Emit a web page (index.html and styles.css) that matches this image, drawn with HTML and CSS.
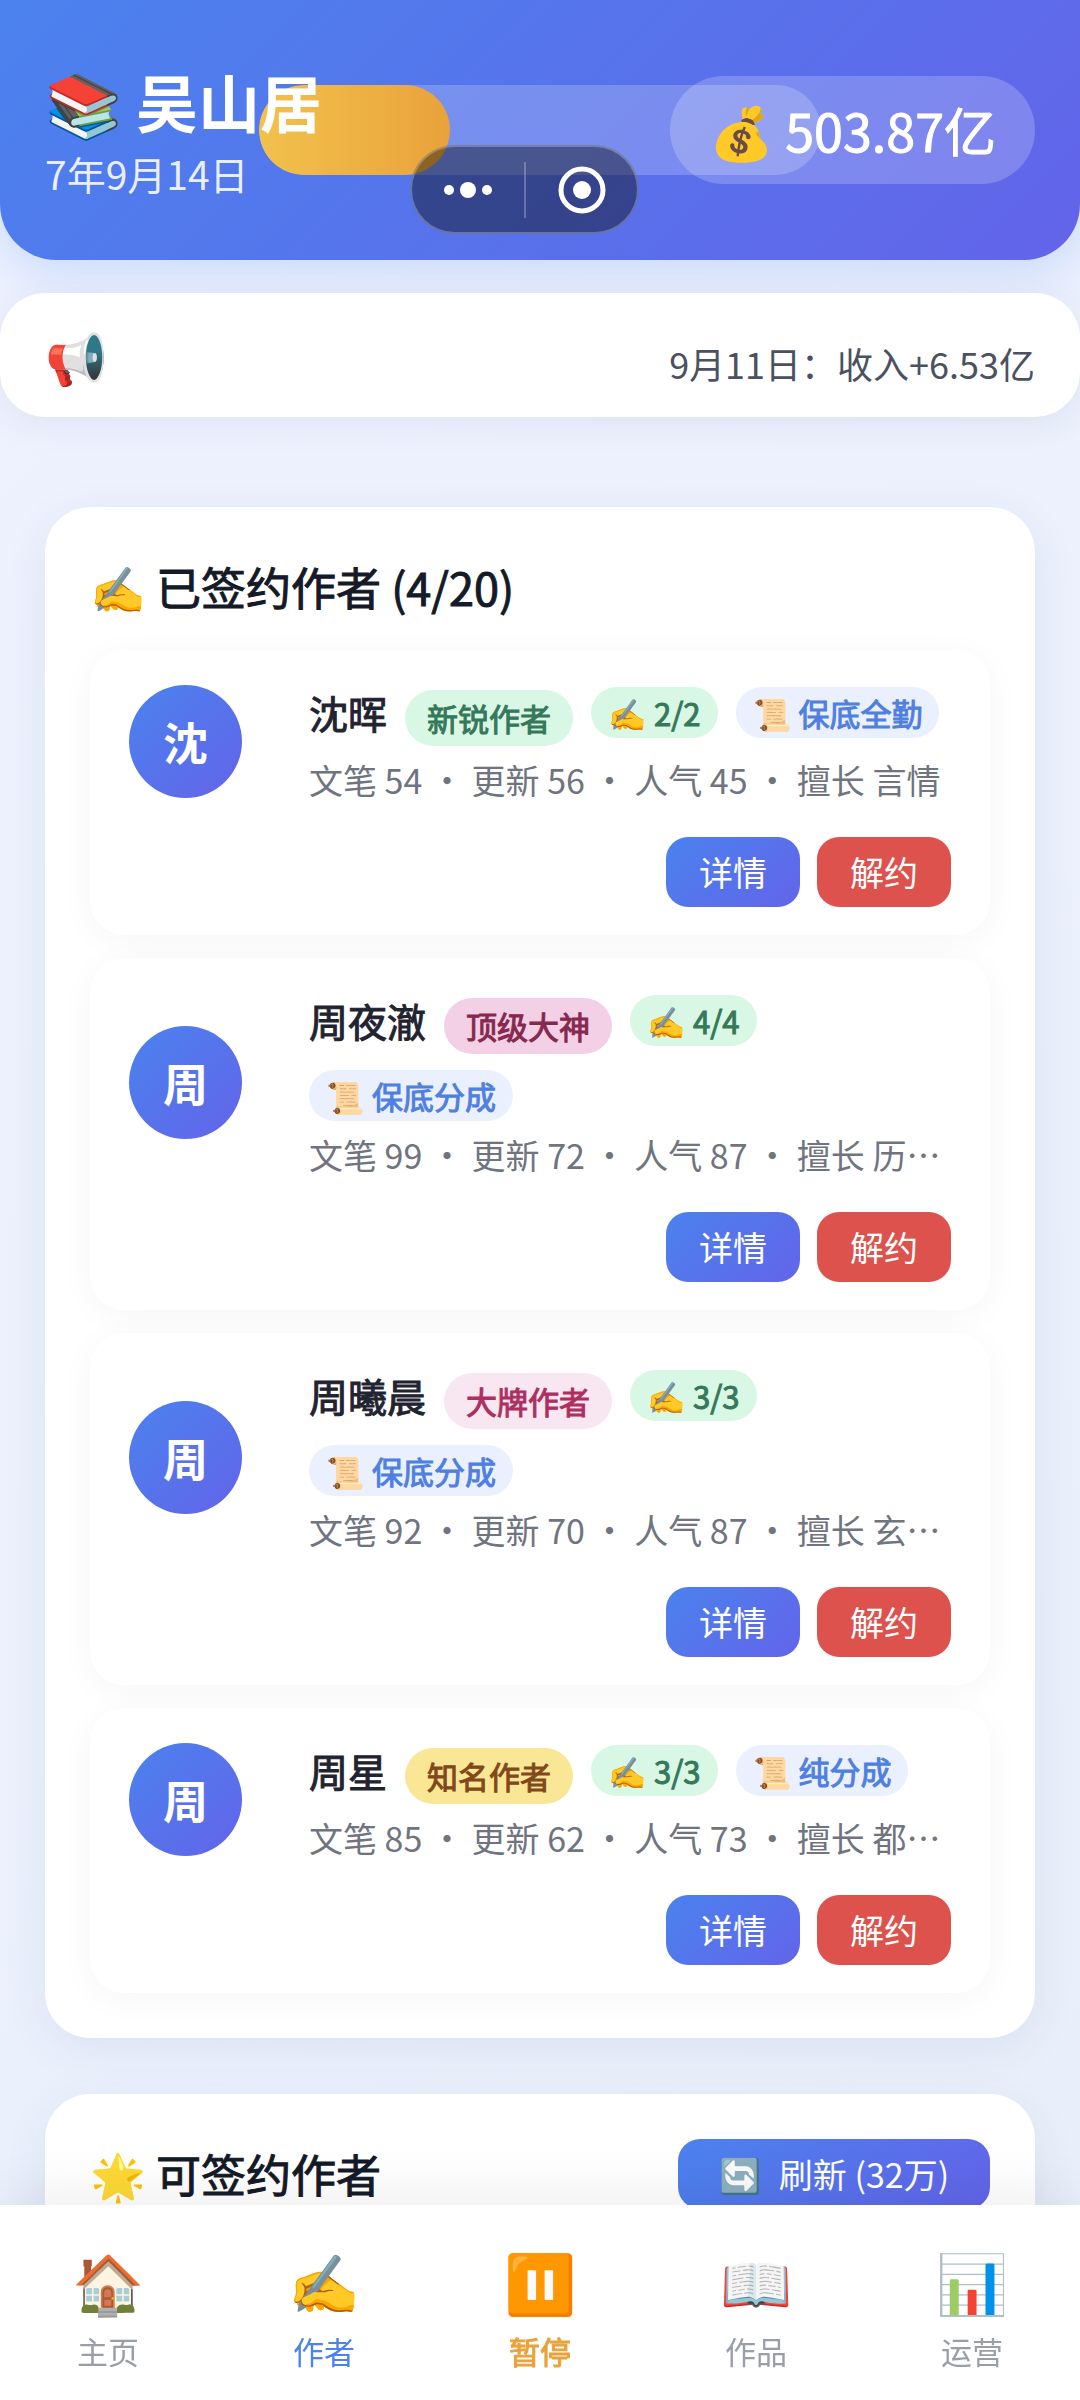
FILE: index.html
```html
<!DOCTYPE html>
<html lang="zh-CN">
<head>
<meta charset="utf-8">
<meta name="viewport" content="width=device-width, initial-scale=1">
<title>吴山居</title>
<link rel="stylesheet" href="styles.css">
</head>
<body>
<header class="topbar">
  <div class="progress"><div class="progress-fill" style="width:34%"></div></div>
  <div class="studio">
    <h1 class="studio-name"><span class="emoji">📚</span> 吴山居</h1>
    <p class="studio-date">7年9月14日</p>
  </div>
  <div class="money medium"><span class="emoji">💰</span> 503.87亿</div>
  <div class="capsule">
    <button type="button" class="capsule-btn" aria-label="更多"><svg width="48" height="48" viewBox="0 0 48 48"><g fill="#fff"><circle cx="5" cy="24" r="5"/><circle cx="24" cy="24" r="8"/><circle cx="43" cy="24" r="5"/></g></svg></button>
    <span class="capsule-line"></span>
    <button type="button" class="capsule-btn" aria-label="关闭"><svg width="48" height="48" viewBox="0 0 48 48"><circle cx="24" cy="24" r="21" fill="none" stroke="#fff" stroke-width="5"/><circle cx="24" cy="24" r="9" fill="#fff"/></svg></button>
  </div>
</header>

<section class="notice">
  <span class="emoji notice-icon">📢</span>
  <p class="notice-text">9月11日：收入+6.53亿</p>
</section>

<main class="content">
  <section class="panel">
    <div class="panel-head">
      <h2 class="panel-title medium"><span class="emoji">✍️</span> 已签约作者 (4/20)</h2>
    </div>
    <div class="author-list">
      <article class="author">
        <div class="author-main">
          <div class="avatar">沈</div>
          <div class="info">
            <div class="tags">
              <h3 class="name medium">沈晖</h3>
              <span class="level level-new medium">新锐作者</span>
              <span class="tag tag-count medium"><span class="emoji">✍️</span> 2/2</span>
              <span class="tag tag-deal medium"><span class="emoji">📜</span> 保底全勤</span>
            </div>
            <p class="stats">文笔 54 • 更新 56 • 人气 45 • 擅长 言情</p>
          </div>
        </div>
        <div class="actions">
          <button type="button" class="btn btn-primary">详情</button>
          <button type="button" class="btn btn-danger">解约</button>
        </div>
      </article>
      <article class="author">
        <div class="author-main">
          <div class="avatar">周</div>
          <div class="info">
            <div class="tags">
              <h3 class="name medium">周夜澈</h3>
              <span class="level level-god medium">顶级大神</span>
              <span class="tag tag-count medium"><span class="emoji">✍️</span> 4/4</span>
              <span class="tag tag-deal medium"><span class="emoji">📜</span> 保底分成</span>
            </div>
            <p class="stats">文笔 99 • 更新 72 • 人气 87 • 擅长 历…</p>
          </div>
        </div>
        <div class="actions">
          <button type="button" class="btn btn-primary">详情</button>
          <button type="button" class="btn btn-danger">解约</button>
        </div>
      </article>
      <article class="author">
        <div class="author-main">
          <div class="avatar">周</div>
          <div class="info">
            <div class="tags">
              <h3 class="name medium">周曦晨</h3>
              <span class="level level-star medium">大牌作者</span>
              <span class="tag tag-count medium"><span class="emoji">✍️</span> 3/3</span>
              <span class="tag tag-deal medium"><span class="emoji">📜</span> 保底分成</span>
            </div>
            <p class="stats">文笔 92 • 更新 70 • 人气 87 • 擅长 玄…</p>
          </div>
        </div>
        <div class="actions">
          <button type="button" class="btn btn-primary">详情</button>
          <button type="button" class="btn btn-danger">解约</button>
        </div>
      </article>
      <article class="author">
        <div class="author-main">
          <div class="avatar">周</div>
          <div class="info">
            <div class="tags">
              <h3 class="name medium">周星</h3>
              <span class="level level-known medium">知名作者</span>
              <span class="tag tag-count medium"><span class="emoji">✍️</span> 3/3</span>
              <span class="tag tag-deal medium"><span class="emoji">📜</span> 纯分成</span>
            </div>
            <p class="stats">文笔 85 • 更新 62 • 人气 73 • 擅长 都…</p>
          </div>
        </div>
        <div class="actions">
          <button type="button" class="btn btn-primary">详情</button>
          <button type="button" class="btn btn-danger">解约</button>
        </div>
      </article>
    </div>
  </section>

  <section class="panel">
    <div class="panel-head">
      <h2 class="panel-title medium"><span class="emoji">🌟</span> 可签约作者</h2>
      <button type="button" class="btn btn-primary btn-refresh"><span class="emoji">🔄</span><span>刷新 (32万)</span></button>
    </div>
  </section>
</main>

<nav class="tabbar">
  <a class="tab" href="#home"><span class="emoji tab-icon">🏠</span><span>主页</span></a>
  <a class="tab tab-active" href="#authors"><span class="emoji tab-icon">✍️</span><span>作者</span></a>
  <a class="tab tab-pause" href="#pause"><span class="emoji tab-icon">⏸️</span><span class="medium">暂停</span></a>
  <a class="tab" href="#works"><span class="emoji tab-icon">📖</span><span>作品</span></a>
  <a class="tab" href="#business"><span class="emoji tab-icon">📊</span><span>运营</span></a>
</nav>
</body>
</html>
```
FILE: styles.css
```css
* { box-sizing: border-box; }

body {
  margin: 0;
  min-height: 100vh;
  background: linear-gradient(135deg, #eef2ff, #e8effa);
  color: #1f2430;
  font-family: "Noto Sans CJK SC", "Noto Sans", sans-serif;
}

h1, h2, h3, p { margin: 0; font-weight: 400; }
button { border: 0; padding: 0; font: inherit; color: inherit; background: none; }

.medium { -webkit-text-stroke: 1px currentColor; }
.emoji { -webkit-text-stroke: 0; }

/* Top bar */
.topbar {
  position: relative;
  display: flex;
  justify-content: space-between;
  align-items: center;
  height: 260px;
  padding: 0 45px;
  border-radius: 0 0 56px 56px;
  background: linear-gradient(135deg, #4b82ee, #6364e9);
  box-shadow: 0 12px 48px rgba(75, 130, 238, .22);
  color: #fff;
}
.progress {
  position: absolute;
  top: 85px;
  left: 24%;
  width: 52%;
  height: 90px;
  border-radius: 45px;
  background: rgba(255, 255, 255, .2);
  overflow: hidden;
}
.progress-fill {
  height: 100%;
  border-radius: 45px;
  background: linear-gradient(90deg, #f2c14c, #e9a23b);
}
.studio, .money { position: relative; }
.studio { padding-bottom: 6px; }
.studio-name { font-size: 62px; line-height: 92px; font-weight: 700; }
.studio-date { font-size: 39px; line-height: 52px; color: rgba(255, 255, 255, .9); }
.money {
  padding: 0 39px;
  border-radius: 54px;
  background: rgba(255, 255, 255, .2);
  font-size: 52px;
  line-height: 108px;
}
.capsule {
  position: absolute;
  top: 145px;
  left: 38%;
  display: flex;
  align-items: center;
  width: 229px;
  height: 89px;
  border: 2px solid rgba(255, 255, 255, .25);
  border-radius: 45px;
  background: rgba(0, 0, 0, .4);
}
.capsule-btn { display: flex; flex: 1; justify-content: center; }
.capsule-line { width: 2px; height: 56px; background: rgba(255, 255, 255, .25); }

/* Notice */
.notice {
  display: flex;
  justify-content: space-between;
  align-items: center;
  position: relative;
  height: 124px;
  margin-top: 33px;
  padding: 0 45px;
  border-radius: 45px;
  background: #fff;
  box-shadow: 0 6px 34px rgba(60, 60, 120, .08);
}
.notice-icon { font-size: 50px; line-height: 64px; }
.notice-text { font-size: 36px; line-height: 48px; padding-top: 16px; color: #4b5160; }

/* Panels */
.content {
  display: flex;
  flex-direction: column;
  gap: 56px;
  padding: 90px 45px 140px;
}
.panel {
  padding: 45px;
  border-radius: 45px;
  background: #fff;
  box-shadow: 0 11px 45px rgba(60, 60, 120, .08);
}
.panel-head { display: flex; justify-content: space-between; align-items: center; }
.panel-title { font-size: 45px; line-height: 70px; color: #151a28; }

.author-list { display: flex; flex-direction: column; gap: 23px; margin-top: 28px; }
.author {
  display: flex;
  flex-direction: column;
  gap: 33px;
  padding: 28px 39px;
  border-radius: 34px;
  background: #fff;
  box-shadow: 0 6px 34px rgba(0, 0, 0, .04);
}
.author-main { display: flex; align-items: center; gap: 67px; }
.avatar {
  flex: none;
  width: 113px;
  height: 113px;
  border-radius: 50%;
  background: linear-gradient(135deg, #4b82ee, #6364e9);
  color: #fff;
  font-size: 45px;
  line-height: 113px;
  font-weight: 700;
  text-align: center;
}
.info { flex: 1; min-width: 0; }
.tags {
  display: flex;
  flex-wrap: wrap;
  align-items: flex-start;
  gap: 16px 18px;
  padding-top: 9px;
}
.name { font-size: 39px; line-height: 50px; }
.level {
  margin-top: 3px;
  padding: 0 22px;
  border-radius: 28px;
  font-size: 31px;
  line-height: 56px;
}
.level-new { background: #d9f7e5; color: #35785a; }
.level-god { background: #f4d0e6; color: #87284f; }
.level-star { background: #f8e7f1; color: #ae2f5f; }
.level-known { background: #fae796; color: #82481b; }
.tag {
  padding: 0 17px;
  border-radius: 26px;
  font-size: 31px;
  line-height: 51px;
}
.tag-count { background: #d9f7e5; color: #35785a; }
.tag-deal { background: #eaf0fd; color: #4f7fe0; }
.stats {
  margin-top: 10px;
  overflow: hidden;
  color: #6f747f;
  font-size: 34px;
  line-height: 48px;
  white-space: nowrap;
}

.actions { display: flex; justify-content: flex-end; gap: 17px; }
.btn {
  padding: 0 33px;
  border-radius: 22px;
  color: #fff;
  font-size: 34px;
  line-height: 70px;
}
.btn-primary { background: linear-gradient(135deg, #4b82ee, #6364e9); }
.btn-danger { background: #dd524c; }
.btn-refresh {
  display: flex;
  justify-content: center;
  gap: 18px;
  min-width: 312px;
}

/* Bottom tabs */
.tabbar {
  position: fixed;
  right: 0;
  bottom: 0;
  left: 0;
  display: flex;
  height: 195px;
  padding-top: 37px;
  background: #fff;
  box-shadow: 0 -6px 56px rgba(0, 0, 0, .08);
}
.tab {
  display: flex;
  flex: 1;
  flex-direction: column;
  align-items: center;
  gap: 13px;
  color: #9a9ea8;
  font-size: 31px;
  line-height: 40px;
  text-decoration: none;
}
.tab-icon { font-size: 58px; line-height: 76px; }
.tab-active { color: #4b82ee; }
.tab-pause { color: #e8a33d; }
```
